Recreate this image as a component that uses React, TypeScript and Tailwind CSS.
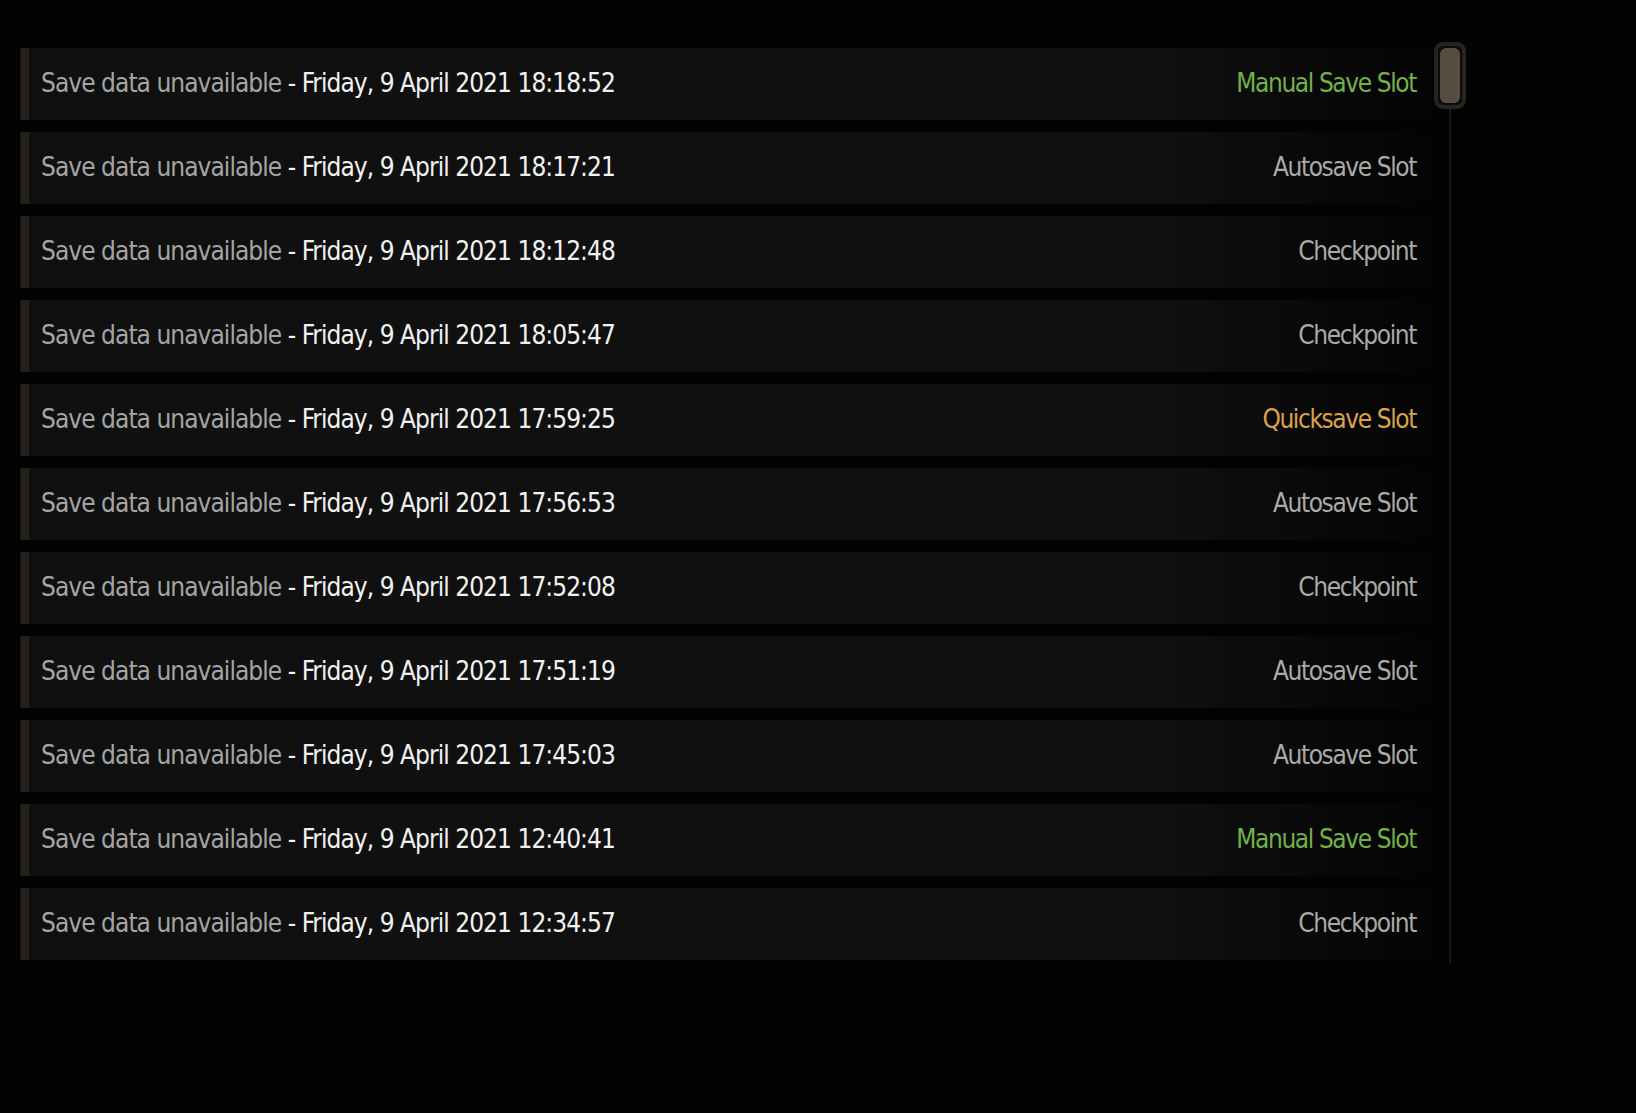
import React, { type FC } from "react";

type SlotKind = "manual" | "auto" | "checkpoint" | "quick";

interface SaveEntry {
  time: string;
  kind: SlotKind;
}

const entries: SaveEntry[] = [
  { time: "18:18:52", kind: "manual" },
  { time: "18:17:21", kind: "auto" },
  { time: "18:12:48", kind: "checkpoint" },
  { time: "18:05:47", kind: "checkpoint" },
  { time: "17:59:25", kind: "quick" },
  { time: "17:56:53", kind: "auto" },
  { time: "17:52:08", kind: "checkpoint" },
  { time: "17:51:19", kind: "auto" },
  { time: "17:45:03", kind: "auto" },
  { time: "12:40:41", kind: "manual" },
  { time: "12:34:57", kind: "checkpoint" },
];

const slotLabel: Record<SlotKind, string> = {
  manual: "Manual Save Slot",
  auto: "Autosave Slot",
  checkpoint: "Checkpoint",
  quick: "Quicksave Slot",
};

const slotColor: Record<SlotKind, string> = {
  manual: "text-[#72b04a]",
  auto: "text-[#a9a9a9]",
  checkpoint: "text-[#a9a9a9]",
  quick: "text-[#d9a24a]",
};

const SaveRow: FC<{ entry: SaveEntry }> = ({ entry }) => (
  <div className="flex h-[72px] items-stretch bg-gradient-to-r from-[#101010] from-80% to-[#101010]/0">
    <div className="w-[9px] border-l border-[#17130f] bg-[#26211c]" />
    <div className="flex flex-1 items-center justify-between pb-[2px] pl-[12px] pr-[28px]">
      <span className="whitespace-nowrap">
        <span className="text-[#a4a4a4]">Save data unavailable</span>
        <span className="text-[#f2f2f2]">
          {" "}- Friday, 9 April 2021 {entry.time}
        </span>
      </span>
      <span className={`whitespace-nowrap tracking-[-1.4px] ${slotColor[entry.kind]}`}>
        {slotLabel[entry.kind]}
      </span>
    </div>
  </div>
);

const App: FC = () => {
  return (
    <div
      className="min-h-[1113px] w-full bg-[#030303] text-[26px] leading-none tracking-[-0.95px]"
      style={{ fontFamily: '"DejaVu Sans Condensed", "DejaVu Sans", sans-serif' }}
    >
      <div className="flex items-start pl-[20px] pt-[48px]">
        <div className="flex w-[1424px] flex-col gap-[12px]">
          {entries.map((e, i) => (
            <SaveRow key={i} entry={e} />
          ))}
        </div>
        <div className="-ml-[10px] -mt-[6px] flex w-[32px] flex-col items-center">
          <div className="h-[67px] w-[32px] rounded-[9px] border-[4px] border-[#27231f] bg-[#0e0c0a] p-[2px]">
            <div className="h-full w-full rounded-[6px] bg-[#574c42]" />
          </div>
          <div className="h-[854px] w-[2px] bg-[#16181c]" />
        </div>
      </div>
    </div>
  );
};

export default App;
